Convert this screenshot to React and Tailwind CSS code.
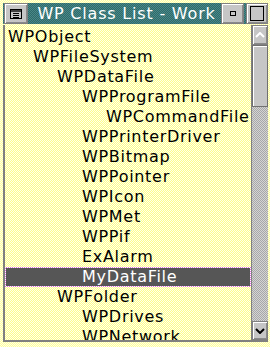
import React from 'react';

const rows = [
  { name: 'WPObject', pad: 'pl-[2px]' },
  { name: 'WPFileSystem', pad: 'pl-[27px]' },
  { name: 'WPDataFile', pad: 'pl-[51px]' },
  { name: 'WPProgramFile', pad: 'pl-[76px]' },
  { name: 'WPCommandFile', pad: 'pl-[100px]' },
  { name: 'WPPrinterDriver', pad: 'pl-[76px]' },
  { name: 'WPBitmap', pad: 'pl-[76px]' },
  { name: 'WPPointer', pad: 'pl-[76px]' },
  { name: 'WPIcon', pad: 'pl-[76px]' },
  { name: 'WPMet', pad: 'pl-[76px]' },
  { name: 'WPPif', pad: 'pl-[76px]' },
  { name: 'ExAlarm', pad: 'pl-[76px]' },
  { name: 'MyDataFile', pad: 'pl-[76px]', selected: true },
  { name: 'WPFolder', pad: 'pl-[51px]' },
  { name: 'WPDrives', pad: 'pl-[76px]' },
  { name: 'WPNetwork', pad: 'pl-[76px]' },
];

const btn =
  'bg-[#c6c6c6] border border-[#808080] shadow-[inset_1px_1px_0_#ffffff,inset_-1px_-1px_0_#8a8a8a] flex items-center justify-center';

const App = () => {
  return (
    <div
      className="w-[270px] h-[347px] flex flex-col p-[3px] pr-[2px] bg-[repeating-conic-gradient(#ffff9c_0_25%,#ffffe6_0_50%)] bg-[length:2px_2px] overflow-hidden"
      style={{ fontFamily: '"DejaVu Sans", sans-serif' }}
    >
      {/* title bar */}
      <div className="h-[21px] flex items-stretch bg-[repeating-conic-gradient(#2e6a6a_0_25%,#4a8888_0_50%)] bg-[length:2px_2px]">
        <div className={btn + ' w-[24px] ml-px'}>
          <svg width="12" height="10" viewBox="0 0 12 10">
            <rect x="0.5" y="0.5" width="11" height="9" fill="#c6c6c6" stroke="#000" />
            <rect x="1" y="1" width="10" height="2" fill="#404040" />
            <line x1="3" y1="4.5" x2="9" y2="4.5" stroke="#000" />
            <line x1="3" y1="6.5" x2="9" y2="6.5" stroke="#000" />
            <line x1="3" y1="8.5" x2="9" y2="8.5" stroke="#000" />
          </svg>
        </div>
        <div className="flex-1 flex items-center justify-center text-white text-[16px] leading-none tracking-[0.8px] pl-[4px] whitespace-nowrap">
          WP Class List - Work
        </div>
        <div className={btn + ' w-[23px]'}>
          <div className="w-[6px] h-[5px] border border-black" />
        </div>
        <div className={btn + ' w-[22px] ml-[2px]'}>
          <div className="w-[14px] h-[15px] border border-black" />
        </div>
      </div>

      {/* client */}
      <div className="flex-1 flex mt-px border-l-2 border-b-2 border-[#808080] overflow-hidden">
        <div className="flex-1 pt-[2px] overflow-hidden tracking-[0.7px] bg-[repeating-conic-gradient(#ffff88_0_25%,#ffffee_0_50%)] bg-[length:2px_2px]">
          {rows.map((r) =>
            r.selected ? (
              <div
                key={r.name}
                className="h-[20px] p-px bg-[repeating-conic-gradient(#e070e0_0_25%,#ffffff_0_50%)] bg-[length:2px_2px]"
              >
                <div className={'h-full bg-[#565656] text-white text-[16px] leading-[18px] whitespace-nowrap ' + r.pad}>
                  {r.name}
                </div>
              </div>
            ) : (
              <div
                key={r.name}
                className={'h-[20px] text-black text-[16px] leading-[20px] whitespace-nowrap ' + r.pad}
              >
                <span className="pl-px">{r.name}</span>
              </div>
            )
          )}
        </div>

        {/* scrollbar */}
        <div className="w-[17px] flex flex-col border-l border-[#808080] bg-[repeating-conic-gradient(#a8a8a8_0_25%,#d4d4d4_0_50%)] bg-[length:2px_2px]">
          <div className={btn + ' h-[20px]'}>
            <svg width="10" height="6" viewBox="0 0 10 6">
              <polyline points="1,5 5,1 9,5" fill="none" stroke="#ffffff" strokeWidth="2" />
            </svg>
          </div>
          <div className="h-[62px] bg-[#c6c6c6] border border-[#707070] shadow-[inset_1px_1px_0_#ffffff]" />
          <div className="flex-1" />
          <div className={btn + ' h-[19px]'}>
            <svg width="10" height="6" viewBox="0 0 10 6">
              <polyline points="1,1 5,5 9,1" fill="none" stroke="#000" strokeWidth="2" />
            </svg>
          </div>
        </div>
      </div>
      <div className="h-[2px]" />
    </div>
  );
};

export default App;
